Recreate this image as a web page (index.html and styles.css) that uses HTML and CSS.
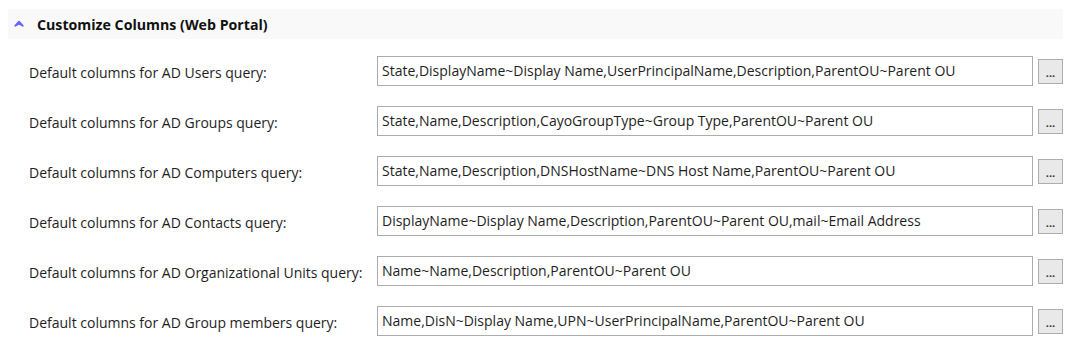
FILE: index.html
```html
<!DOCTYPE html>
<html lang="en">
<head>
    <meta charset="UTF-8">
    <title>Customize Columns</title>
    <link rel="stylesheet" href="styles.css">
</head>
<body>
    <div class="section">
        <div class="section-header">
            <svg class="collapse-icon" width="10" height="7" viewBox="0 0 10 7">
                <path d="M1.2 5.8 L5 1.6 L8.8 5.8 L5 3.6 Z" fill="#6464ff" stroke="#6464ff" stroke-width="1.8" stroke-linejoin="round"/>
            </svg>
            <span class="section-title">Customize Columns (Web Portal)</span>
        </div>
        <div class="rows">
            <div class="row">
                <label>Default columns for AD Users query:</label>
                <div class="field">State,DisplayName~Display Name,UserPrincipalName,Description,ParentOU~Parent OU</div>
                <button class="more-btn">...</button>
            </div>
            <div class="row">
                <label>Default columns for AD Groups query:</label>
                <div class="field">State,Name,Description,CayoGroupType~Group Type,ParentOU~Parent OU</div>
                <button class="more-btn">...</button>
            </div>
            <div class="row">
                <label>Default columns for AD Computers query:</label>
                <div class="field">State,Name,Description,DNSHostName~DNS Host Name,ParentOU~Parent OU</div>
                <button class="more-btn">...</button>
            </div>
            <div class="row">
                <label>Default columns for AD Contacts query:</label>
                <div class="field">DisplayName~Display Name,Description,ParentOU~Parent OU,mail~Email Address</div>
                <button class="more-btn">...</button>
            </div>
            <div class="row">
                <label>Default columns for AD Organizational Units query:</label>
                <div class="field">Name~Name,Description,ParentOU~Parent OU</div>
                <button class="more-btn">...</button>
            </div>
            <div class="row">
                <label>Default columns for AD Group members query:</label>
                <div class="field">Name,DisN~Display Name,UPN~UserPrincipalName,ParentOU~Parent OU</div>
                <button class="more-btn">...</button>
            </div>
        </div>
    </div>
</body>
</html>
```

FILE: styles.css
```css
body {
    margin: 0;
    background-color: #fff;
    font-family: 'Open Sans', 'Noto Sans', sans-serif;
    font-size: 14px;
    color: #1e1e1e;
}
.section {
    padding: 9px 18px 0 8px;
}
.section-header {
    display: flex;
    align-items: center;
    height: 30px;
    background-color: #f9f9f9;
    padding-left: 6px;
}
.collapse-icon {
    margin-right: 13px;
    margin-top: -2px;
}
.section-title {
    font-weight: bold;
    font-size: 14.2px;
    color: #111;
    margin-top: 1px;
}
.rows {
    padding-top: 7px;
}
.row {
    display: grid;
    grid-template-columns: 343px 656px 25px;
    column-gap: 5px;
    align-items: center;
    height: 50px;
    padding-left: 21px;
}
.row label {
    white-space: nowrap;
    margin-top: 2px;
}
.field {
    box-sizing: border-box;
    height: 30px;
    border: 1px solid #acacac;
    padding: 0 4px;
    line-height: 28px;
    white-space: nowrap;
    overflow: hidden;
}
.more-btn {
    box-sizing: border-box;
    width: 25px;
    height: 25px;
    padding: 0 0 5px;
    border: 1px solid #adadad;
    background-color: #e9e9e9;
    font-family: inherit;
    font-size: 11px;
    font-weight: bold;
    color: #333;
    line-height: 1;
    display: flex;
    align-items: flex-end;
    justify-content: center;
}
```
